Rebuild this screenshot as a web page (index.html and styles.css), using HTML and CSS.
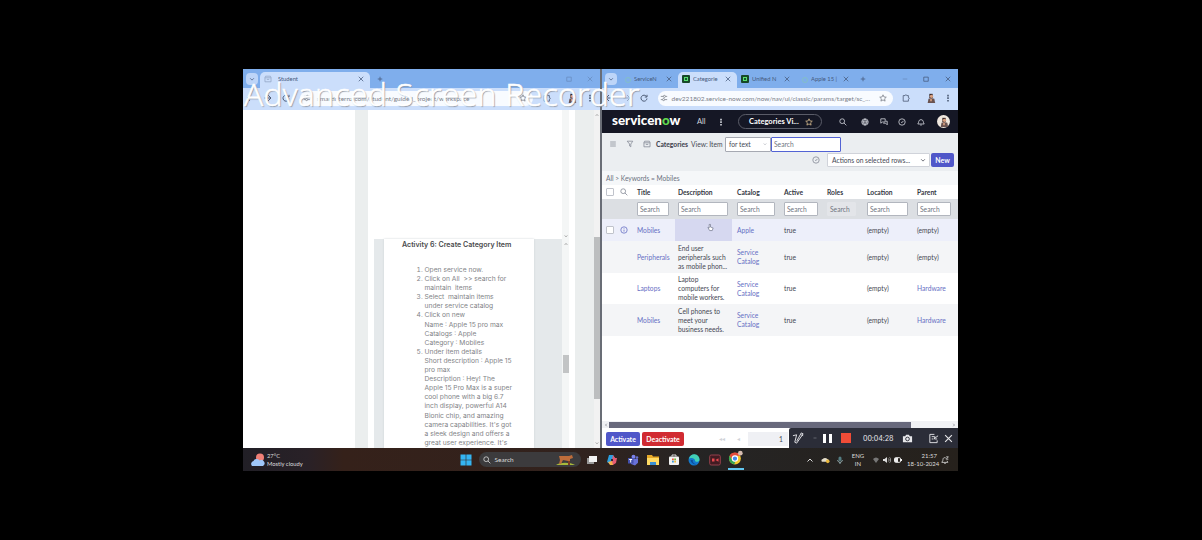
FILE: index.html
```
<!DOCTYPE html>
<html lang="en">
<head>
<meta charset="utf-8">
<title>Desktop</title>
<link rel="stylesheet" href="styles.css">
</head>
<body>
<svg class="defs" width="0" height="0">
  <symbol id="x" viewBox="0 0 8 8"><path d="M1 1l6 6M7 1L1 7"/></symbol>
  <symbol id="plus" viewBox="0 0 8 8"><path d="M4 1v6M1 4h6"/></symbol>
  <symbol id="chev" viewBox="0 0 8 8"><path d="M1.500 3L4 5.500 6.500 3"/></symbol>
  <symbol id="up" viewBox="0 0 8 8"><path d="M1.500 5.500L4 3l2.500 2.500"/></symbol>
  <symbol id="sq" viewBox="0 0 8 8"><path d="M1 1.500h6v5.500H1z"/></symbol>
  <symbol id="min" viewBox="0 0 8 8"><path d="M1 4h6"/></symbol>
  <symbol id="back" viewBox="0 0 8 8"><path d="M7.500 4H1M4 1L1 4l3 3"/></symbol>
  <symbol id="reload" viewBox="0 0 8 8"><path d="M6.500 2.500A3 3 0 1 0 7 4.500M7 .8v2.200H4.800"/></symbol>
  <symbol id="star" viewBox="0 0 10 10"><path d="M5 1l1.200 2.700 2.900.3L7 6l.6 2.900L5 7.400 2.400 8.900 3 6 .9 4l2.900-.3z"/></symbol>
  <symbol id="mag" viewBox="0 0 10 10"><path d="M7 4A3 3 0 1 1 1 4a3 3 0 0 1 6 0zM6.200 6.200L9.200 9.200"/></symbol>
  <symbol id="globe" viewBox="0 0 10 10"><path d="M9 5A4 4 0 1 1 1 5a4 4 0 0 1 8 0zM1 4h8M1 6.300h8M5 1c-2.300 2-2.300 6 0 8M5 1c2.300 2 2.300 6 0 8"/></symbol>
  <symbol id="chat" viewBox="0 0 10 10"><path d="M1 1h5.500v4H3L1 6.500zM4 6.500h3l2 2V4H7.500"/></symbol>
  <symbol id="clock" viewBox="0 0 10 10"><path d="M9 5A4 4 0 1 1 1 5a4 4 0 0 1 8 0zM5 5.500l2-2M4 5.500h1.500"/></symbol>
  <symbol id="bell" viewBox="0 0 10 10"><path d="M1 7.500C2.500 6 1.500 2 5 2s2.500 4 4 5.500zM4 8.800h2"/></symbol>
  <symbol id="tune" viewBox="0 0 10 10"><path d="M1 3h3M7 3h2M1 7h2M6 7h3"/><circle cx="5.500" cy="3" r="1.300"/><circle cx="4.500" cy="7" r="1.300"/></symbol>
  <symbol id="ext" viewBox="0 0 10 10"><path d="M1.500 2h2.300c0-1.400 2.200-1.400 2.200 0H8v2.400c1.400 0 1.400 2.200 0 2.200V9H1.500z"/></symbol>
  <symbol id="dots" viewBox="0 0 10 10"><path class="solid" d="M4 1h2v2H4zM4 4.200h2v2H4zM4 7.400h2v2H4z"/></symbol>
  <symbol id="menu" viewBox="0 0 10 10"><path d="M1.500 2.500h7M1.500 5h7M1.500 7.500h7"/></symbol>
  <symbol id="funnel" viewBox="0 0 10 10"><path d="M1.500 1.500h7L6 5v3.500L4.500 7.500V5z"/></symbol>
  <symbol id="inbox" viewBox="0 0 10 10"><path d="M2 1.500h6l.8 1.500v5.500H1.200V3zM1.200 3.500h7.600M3.500 5.500h3"/></symbol>
  <symbol id="info" viewBox="0 0 10 10"><path d="M9 5A4 4 0 1 1 1 5a4 4 0 0 1 8 0zM5 4.500v2.500M5 2.700v.8"/></symbol>
  <symbol id="person" viewBox="0 0 12 12"><path class="hair" d="M4 1h4v5H4z"/><circle class="skin" cx="6.500" cy="4" r="2"/><path class="shirt" d="M2 12l1-5 3-1 4 1 1 5z"/><path class="skin" d="M5 7h2v3H5z"/></symbol>
</svg>

<main class="screen">
  <div class="windows">
    <section class="win left">
      <div class="tabs">
        <span class="drop"><svg class="i s6"><use href="#chev"/></svg></span>
        <span class="tab on"><svg class="i s8 fade"><use href="#inbox"/></svg><b class="label">Student</b><svg class="i s6"><use href="#x"/></svg></span>
        <svg class="i s6"><use href="#plus"/></svg>
        <svg class="i s6 push fade"><use href="#sq"/></svg><svg class="i s6 last fade"><use href="#x"/></svg>
      </div>
      <div class="bar">
        <svg class="i s8"><use href="#back"/></svg>
        <svg class="i s8 flip"><use href="#back"/></svg>
        <svg class="i s8"><use href="#reload"/></svg>
        <span class="url"><svg class="i s8"><use href="#tune"/></svg><span>smartinternz.com/student/guided_project/workspace</span><svg class="i s8 end"><use href="#star"/></svg></span>
        <svg class="i s8"><use href="#ext"/></svg>
        <svg class="s10"><use href="#person"/></svg>
        <svg class="i s8"><use href="#dots"/></svg>
      </div>
      <div class="page">
        <div class="side"></div>
        <div class="content">
          <div class="upper"><span class="pane"></span><span class="track"><svg class="i s4 bottom"><use href="#chev"/></svg></span></div>
          <div class="lower">
            <article class="doc">
              <h1>Activity 6: Create Category Item</h1>
              <ol>
                <li>Open service now.</li>
                <li>Click on All &nbsp;&gt;&gt; search for<br>maintain &nbsp;items</li>
                <li>Select &nbsp;maintain items<br>under service catalog</li>
                <li>Click on new<br>Name : Apple 15 pro max<br>Catalogs : Apple<br>Category : Mobiles</li>
                <li>Under item details<br>Short description : Apple 15<br>pro max<br>Description : Hey! The<br>Apple 15 Pro Max is a super<br>cool phone with a big 6.7<br>inch display, powerful A14<br>Bionic chip, and amazing<br>camera capabilities. It's got<br>a sleek design and offers a<br>great user experience. It's</li>
              </ol>
            </article>
            <span class="track"><svg class="i s4"><use href="#up"/></svg><span class="thumb"></span></span>
          </div>
        </div>
        <div class="gutter"></div>
        <div class="scroll"><svg class="i s4"><use href="#up"/></svg><span class="thumb"></span><svg class="i s4 down"><use href="#chev"/></svg></div>
      </div>
    </section>

    <section class="win right">
      <div class="tabs">
        <span class="drop"><svg class="i s6"><use href="#chev"/></svg></span>
        <span class="tab"><i class="fav pale"></i><b class="label">ServiceN</b><svg class="i s6"><use href="#x"/></svg></span>
        <span class="tab on"><i class="fav"></i><b class="label">Categorie</b><svg class="i s6"><use href="#x"/></svg></span>
        <span class="tab"><i class="fav"></i><b class="label">Unified N</b><svg class="i s6"><use href="#x"/></svg></span>
        <span class="tab"><i class="fav pale"></i><b class="label">Apple 15 |</b><svg class="i s6"><use href="#x"/></svg></span>
        <svg class="i s6 add"><use href="#plus"/></svg>
        <svg class="i s6 push fade"><use href="#min"/></svg><svg class="i s6 mid"><use href="#sq"/></svg><svg class="i s6 last"><use href="#x"/></svg>
      </div>
      <div class="bar">
        <svg class="i s8"><use href="#back"/></svg>
        <svg class="i s8 flip fade"><use href="#back"/></svg>
        <svg class="i s8"><use href="#reload"/></svg>
        <span class="url"><svg class="i s8"><use href="#tune"/></svg><span>dev221802.service-now.com/now/nav/ui/classic/params/target/sc_...</span><svg class="i s8 end"><use href="#star"/></svg></span>
        <svg class="i s8"><use href="#ext"/></svg>
        <svg class="s10"><use href="#person"/></svg>
        <svg class="i s8"><use href="#dots"/></svg>
      </div>
      <nav class="nav">
        <b class="logo">servicen<em>o</em>w</b><span class="all">All</span><svg class="i s8"><use href="#dots"/></svg>
        <span class="pill"><b>Categories Vi...</b><svg class="i s8"><use href="#star"/></svg></span>
        <svg class="i s8"><use href="#mag"/></svg><svg class="i s8"><use href="#globe"/></svg><svg class="i s8"><use href="#chat"/></svg><svg class="i s8"><use href="#clock"/></svg><svg class="i s8"><use href="#bell"/></svg>
        <span class="avatar"><svg class="s10"><use href="#person"/></svg></span>
      </nav>
      <header class="head">
        <div class="line1">
          <svg class="i s8"><use href="#menu"/></svg><svg class="i s8"><use href="#funnel"/></svg><svg class="i s8"><use href="#inbox"/></svg>
          <b class="t1">Categories</b><span class="t2">View: Item</span>
          <span class="select">for text<svg class="i s4"><use href="#chev"/></svg></span><span class="field focus">Search</span>
        </div>
        <div class="line2">
          <svg class="i s8"><use href="#clock"/></svg>
          <span class="select">Actions on selected rows...<svg class="i s6"><use href="#chev"/></svg></span><b class="btn">New</b>
        </div>
      </header>
      <div class="crumb">All &gt; Keywords = Mobiles</div>
      <div class="table">
        <div class="row th"><span><i class="check"></i></span><span><svg class="i s8"><use href="#mag"/></svg></span><b>Title</b><b>Description</b><b>Catalog</b><b>Active</b><b>Roles</b><b>Location</b><b>Parent</b></div>
        <div class="row find"><span></span><span></span><span class="field">Search</span><span class="field">Search</span><span class="field">Search</span><span class="field">Search</span><span class="field off">Search</span><span class="field">Search</span><span class="field">Search</span></div>
        <div class="row sel"><span><i class="check"></i></span><span><svg class="i s8 blue"><use href="#info"/></svg></span><a>Mobiles</a><span class="hot"><svg class="hand" viewBox="0 0 8 9"><path d="M2.500 1v4L1 4.500l2 3.500h3l1-3-3-1V1z"/></svg></span><a>Apple</a><span>true</span><span></span><span>(empty)</span><span>(empty)</span></div>
        <div class="row tall alt"><span></span><span></span><a>Peripherals</a><span>End user<br>peripherals such<br>as mobile phon...</span><a>Service<br>Catalog</a><span>true</span><span></span><span>(empty)</span><span>(empty)</span></div>
        <div class="row tall"><span></span><span></span><a>Laptops</a><span>Laptop<br>computers for<br>mobile workers.</span><a>Service<br>Catalog</a><span>true</span><span></span><span>(empty)</span><a>Hardware</a></div>
        <div class="row tall alt"><span></span><span></span><a>Mobiles</a><span>Cell phones to<br>meet your<br>business needs.</span><a>Service<br>Catalog</a><span>true</span><span></span><span>(empty)</span><a>Hardware</a></div>
      </div>
      <div class="hscroll"><svg class="i s4 lt"><use href="#up"/></svg><span class="hthumb"></span><svg class="i s4 rt"><use href="#up"/></svg></div>
      <footer class="foot"><b class="btn">Activate</b><b class="btn red">Deactivate</b><span class="pg">◂◂</span><span class="pg">◂</span><span class="num">1</span></footer>
    </section>
  </div>

  <footer class="taskbar">
    <svg class="weather" viewBox="0 0 14 14"><circle cx="9" cy="4.500" r="4" fill="#f08077"/><path d="M1 13a3 3 0 0 1 1.500-5 3.500 3.500 0 0 1 6-.5A3 3 0 0 1 12 13z" fill="#9fc7fa"/></svg>
    <div class="wtext">27°C<br>Mostly cloudy</div>
    <svg class="app" viewBox="0 0 12 12"><path d="M.5.5h5.200v5.200H.5zM6.300.5h5.200v5.200H6.300zM.5 6.300h5.200v5.200H.5zM6.300 6.300h5.200v5.200H6.300z" fill="#35b5f2"/></svg>
    <div class="tsearch"><svg class="i s8"><use href="#mag"/></svg>Search<svg class="deer" viewBox="0 0 20 12"><path d="M0 11c4-3 14-3 19 0z" fill="#a8b93b"/><path d="M3 2h10l3-1 1 3-3 1v5h-2V7L7 6l-2 4H3l1-4z" fill="#bd6d3b"/><path d="M12 7h2v4h-2z" fill="#7a3c21"/></svg></div>
    <svg class="app" viewBox="0 0 12 12"><path d="M1 4h7v6H1z" fill="#999"/><path d="M3 2h8v6H3z" fill="#f2f2f2"/></svg>
    <svg class="app" viewBox="0 0 12 12"><path d="M3 1h4l2 3-3 2-2 4-3-2z" fill="#2a9fe0"/><path d="M7 1l2 3h2l-1 5-3 2H4l2-5z" fill="#e45b73"/><path d="M4 11L2 8l4-1 1 4z" fill="#f2b04e"/><path d="M5 5h2v2H5z" fill="#322c36"/></svg>
    <svg class="app" viewBox="0 0 12 12"><circle cx="6.500" cy="2.700" r="2" fill="#7b83eb"/><circle cx="10" cy="3.500" r="1.300" fill="#6670cf"/><path d="M3 4.800h8v4L8 11.500 4 10z" fill="#6871d8"/><path d="M1 4h5.500v5.500H1z" fill="#4350ad"/><path d="M2.200 5.500h3M3.700 5.500v3" stroke="#fff"/></svg>
    <svg class="app" viewBox="0 0 12 12"><path d="M0 1h5l1 1.500h6V11H0z" fill="#e7a928"/><path d="M0 4h12v7H0z" fill="#ffdb65"/><path d="M3 8h6v3H3z" fill="#398fd2"/></svg>
    <svg class="app" viewBox="0 0 12 12"><rect x="1" y="2.500" width="10" height="8.500" rx="1" fill="#f2f2f2"/><path d="M4 2.500V1h4v1.500" fill="none" stroke="#ddd"/><path d="M4 4.500h1.800v1.800H4z" fill="#e7573b"/><path d="M6.200 4.500H8v1.800H6.200z" fill="#78b83b"/><path d="M4 6.700h1.800v1.800H4z" fill="#3b9cde"/><path d="M6.200 6.700H8v1.800H6.200z" fill="#efb73c"/></svg>
    <svg class="app" viewBox="0 0 12 12"><circle cx="6" cy="6" r="5.500" fill="#1379ce"/><path d="M1 5a5.200 5.200 0 0 1 10.500 1c0 2-4 2.500-4.500.8C7.500 4 2.500 3 1 5z" fill="#42d1b7"/><path d="M5 6c-1 2 1 5 4.500 4A5 5 0 0 1 2.500 6z" fill="#0c4e9d"/></svg>
    <svg class="app" viewBox="0 0 12 12"><rect x=".7" y="1" width="10.600" height="10" rx="1.500" fill="#421b22" stroke="#96404c"/><path d="M3 4.500h2.500v3H3zM6.500 6l3-1.700v3.400z" fill="#e5484e"/></svg>
    <span class="chrome"><svg viewBox="0 0 14 14"><circle cx="6.500" cy="7.500" r="5.500" fill="#f4c72e"/><path d="M1.500 5a5.500 5.500 0 0 1 10 0H6.500L4.500 9z" fill="#e44b3c"/><path d="M1.500 5l3.300 5 2 .5-1 2.500A5.500 5.500 0 0 1 1.500 5z" fill="#36a853"/><circle cx="6.500" cy="7.500" r="2.500" fill="#4389ed" stroke="#fff"/><circle cx="11.500" cy="2.500" r="2.200" fill="#d7bdb1"/></svg></span>
    <svg class="i s8 tray"><use href="#up"/></svg>
    <svg class="cloud" viewBox="0 0 10 8"><path d="M1 6a2 2 0 0 1 1-3 3 3 0 0 1 5 0 2 2 0 0 1 1 3z" fill="#e3dcc8"/><circle cx="7.500" cy="5.500" r="2" fill="#e9b83e"/></svg>
    <svg class="mic" viewBox="0 0 6 8"><rect x="1.500" y=".5" width="3" height="4.500" rx="1.500" fill="#547d82"/><path d="M.7 4c0 3 4.600 3 4.600 0M3 6v2" fill="none" stroke="#a9c8cc" stroke-width=".8"/></svg>
    <div class="lang">ENG<br>IN</div>
    <div class="status"><svg viewBox="0 0 8 8"><path d="M1 3c2-2 4-2 6 0L4 7z" fill="#777"/></svg><svg viewBox="0 0 8 8"><path d="M0 3h1.500L4 1v6L1.500 5H0z" fill="#ddd"/><path d="M5.300 2.500c1 1 1 2 0 3M6.600 1.300c1.500 1.800 1.500 3.600 0 5.400" fill="none" stroke="#bbb" stroke-width=".8"/></svg><svg viewBox="0 0 8 8"><rect x=".5" y="1.700" width="6" height="4.600" rx="1" fill="none" stroke="#eee"/><path d="M1 2h3v4H1zM7 3h1v2H7z" fill="#eee"/></svg></div>
    <div class="time">21:57<br>18-10-2024</div>
    <svg class="i bellz" viewBox="0 0 10 10"><path d="M6 2.500C2.500 1 2.500 4 2.300 5.500L1 8h7.500L7.500 6M4 9.200h2M6.500 1h2.700L6.500 4h2.700"/></svg>
  </footer>

  <div class="recorder">
    <svg class="i pen" viewBox="0 0 14 14"><path d="M1 4l4-1-2 8 2 1 7-10-2-1-5 9M10 3l2 1"/></svg><svg class="i s4 dotc"><use href="#min"/></svg>
    <i class="pause"></i><i class="stop"></i><span>00:04:28</span>
    <svg class="cam" viewBox="0 0 12 12"><path d="M1 3.500h2.500L4.500 2h3l1 1.500H11V10H1z" fill="#e7e7ea"/><circle cx="6" cy="6.500" r="2" fill="#e7e7ea" stroke="#2b2d38"/></svg>
    <svg class="i cam" viewBox="0 0 12 12"><path d="M7 1.500H2v9h8V8M4 4h3M4 6.500h2M7 6l4-3M7.500 3.500L7 6.500h3"/></svg>
    <svg class="i rx"><use href="#x"/></svg>
  </div>
  <div class="watermark">Advanced Screen Recorder</div>
</main>
</body>
</html>
```
FILE: styles.css
```
* { box-sizing: border-box; }
body { margin: 0; width: 1202px; height: 540px; overflow: hidden; background: #000; padding: 69px 0 0 243px; font-family: Lato, "Liberation Sans", sans-serif; font-size: 6.7px; color: #464854; }
.defs { display: block; height: 0; position: absolute; }
svg { display: block; flex: none; }
.screen { position: relative; width: 715px; height: 402px; background: #232323; white-space: nowrap; }
.windows { display: grid; grid-template-columns: 357px 356px; gap: 2px; height: 379px; background: #696d76; }
.win { display: flex; flex-direction: column; background: #fff; overflow: hidden; }

/* icons */
.i { fill: none; stroke: currentColor; stroke-width: 1; }
.solid { fill: currentColor; stroke: none; }
.s4 { width: 4px; height: 4px; }
.s6 { width: 6px; height: 6px; }
.s8 { width: 8px; height: 8px; }
.s10 { width: 10px; height: 10px; }
.fade { opacity: .4; }
.flip { transform: scaleX(-1); }
.hair { fill: #3a2927; }
.skin { fill: #d9a080; }
.shirt { fill: #6a5350; }

/* browser chrome */
.tabs { display: flex; align-items: center; height: 19px; background: #7faeec; color: #45597c; padding-left: 3px; flex: none; }
.drop { display: grid; place-items: center; width: 12px; height: 12px; border-radius: 4px; background: #bdd5f8; margin-right: 2px; }
.tab { display: flex; align-items: center; width: 59px; height: 16px; padding: 0 6px 3px 4px; margin-top: 3px; }
.tab.on { background: #cbdefb; border-radius: 5px 5px 0 0; }
.label { font-weight: 400; font-size: 5.8px; line-height: 8px; flex: 1; margin-left: 3px; overflow: hidden; }
.left .tab { width: 110px; margin-right: 7px; }
.left .label { margin-left: 6px; }
.tabs .add { margin-left: 5px; }
.tabs .push { margin-left: auto; margin-right: 15px; }
.tabs .mid { margin-right: 16px; }
.tabs .last { margin-right: 7px; }
.fav { width: 8px; height: 8px; background: #17552f; border: 2px solid #174828; box-shadow: inset 0 0 0 1px #58e06f; border-radius: 1px; }
.fav.pale { background: none; border-color: transparent; box-shadow: none; }
.fav.pale::before { content: ""; display: block; width: 4px; height: 4px; border: 1px solid #83bfc7; border-radius: 50%; }
.bar { display: flex; align-items: center; height: 22px; background: #cbdefb; color: #4c5b75; gap: 10px; padding: 0 6px 2px 3px; flex: none; }
.right .bar { gap: 9.500px; }
.url { flex: 1; display: flex; align-items: center; gap: 4px; height: 15px; border-radius: 8px; background: #f8fbff; padding: 0 6px 0 2px; font-size: 6.5px; color: #7b8089; min-width: 0; }
.left .url { padding-left: 3px; gap: 6px; }
.end { margin-left: auto; }
.bar > .s10 { margin: 0 -1px 0 6px; }

/* document window */
.page { flex: 1; display: grid; grid-template-columns: 112px 207px 32px 6px; min-height: 0; }
.side { background: #fff; }
.content { display: flex; flex-direction: column; min-height: 0; border-left: 13px solid #ebeeee; }
.upper { height: 129px; display: flex; justify-content: space-between; }
.track { width: 7px; background: #f4f6f6; display: flex; flex-direction: column; align-items: center; color: #444; padding-top: 3px; margin-right: -7px; }
.bottom { margin: auto 0 1px; }
.lower { flex: 1; display: flex; min-height: 0; margin-left: 6px; background: #e5e9eb; padding-left: 10px; justify-content: space-between; }
.content .thumb { width: 6px; height: 18px; background: #c2c4c5; margin-top: 109px; }
.gutter { background: linear-gradient(90deg, transparent 7px, #fff 7px 13px, #ebeeee 13px); }
.scroll { background: #f2f2f2; display: flex; flex-direction: column; align-items: center; color: #555; padding: 3px 0; }
.scroll .thumb { width: 6px; height: 162px; background: #bcbebf; margin-top: 120px; }
.scroll .down { margin-top: auto; }
.doc { width: 150px; background: #fff; padding-left: 18px; font-family: Inter, sans-serif; overflow: hidden; box-shadow: 0 0 2px #ccd3d7; }
.doc h1 { font-size: 7.050px; line-height: 10px; margin: 1px 0 16px; font-weight: 600; color: #4a4b4d; }
.doc ol { margin: 0; padding-left: 22.500px; font-size: 6.700px; line-height: 9.100px; color: #828487; }

/* list window */
.nav { display: grid; grid-template-columns: 85px 27px 13px 105px 21px 24px 13px 24px 14px 30px; align-items: center; height: 23px; background: #151725; color: #d3d5dd; font-size: 7.5px; flex: none; }
.nav > .s8 { justify-self: center; }
.logo { font-size: 13.400px; padding-left: 10px; color: #fff; line-height: 20px; font-weight: 900; height: 23px; }
.logo em { font-style: normal; color: #62d84e; }
.all { padding-left: 10px; }
.pill { display: flex; align-items: center; gap: 6px; width: 84px; height: 15px; margin-left: 11px; padding-left: 10px; border: 1px solid #5a5c68; border-radius: 8px; font-size: 7.500px; color: #fff; }
.pill svg { color: #d8bd8f; }
.avatar { display: grid; place-items: center; width: 13px; height: 13px; border-radius: 50%; background: #f0e8df; justify-self: end; margin-right: 8px; }
.head { height: 38px; background: #ebeef1; flex: none; }
.line1 { display: flex; align-items: center; height: 20px; padding: 2px 0 0 7px; gap: 9px; }
.line1 svg, .th svg { color: #858a97; }
.line1 .t1 { margin-left: -4px; }
.t1 { font-size: 6.700px; width: 32px; font-weight: 900; }
.t2 { width: 32px; margin-left: -6px; font-size: 6.700px; }
.line1 .select { width: 46px; margin-left: -7px; height: 15px; }
.line1 .focus { margin-left: -9px; width: 70px; height: 15px; border: 1px solid #5363d4; }
.select { display: flex; align-items: center; justify-content: space-between; background: #fff; border: 1px solid #a6a9b2; padding: 0 3px; border-radius: 1px; }
.line2 { display: flex; align-items: center; justify-content: flex-end; height: 14px; padding-right: 4px; }
.line2 > svg { color: #858a97; margin-right: 7px; }
.line2 .select { width: 103px; height: 14px; border-color: #d0d3da; padding-left: 4px; font-size: 6.700px; }
.btn { display: grid; place-items: center; height: 14px; width: 23px; background: #5057c9; color: #fff; border-radius: 2px; font-size: 6.900px; margin-left: 1px; }
.crumb { height: 14px; line-height: 14px; background: #f5f7f9; padding-left: 4px; color: #6b7280; font-size: 6.600px; flex: none; }
.table { flex: 1; }
.row { display: grid; grid-template-columns: 16px 19px 41px 59px 47px 43px 40px 50px 41px; height: 14px; align-items: center; line-height: 9px; }
.row > span:first-child { justify-self: center; }
.row > span:nth-child(2) { padding-left: 2px; }
.th b { color: #343743; }
.check { display: block; width: 8px; height: 8px; background: #fff; border: 1px solid #c0c3cb; border-radius: 1px; }
.field { display: flex; align-items: center; height: 14px; background: #fff; border: 1px solid #b2b6be; border-radius: 1px; padding-left: 2px; color: #70747f; font-size: 6.700px; }
.find { height: 20px; background: #dcdfe3; }
.find .field { margin: 0 9px 0 0; }
.find .off { background: #e3e5e9; border-color: #e3e5e9; margin-right: 11px; }
.find .field:last-child { margin-right: 7px; }
.sel { height: 22px; background: #edeffa; }
.row > .hot { align-self: stretch; background: #d6d8f0; margin: 0 5px 0 -3px; padding: 4px 0 0 32px; }
.hand { width: 7px; height: 9px; fill: #fff; stroke: #70758b; stroke-width: .8; }
.row a, .blue { color: #6770c4; }
.tall { height: 31.600px; padding-top: 1px; }
.alt { background: #f4f5f7; }
.hscroll { display: flex; align-items: center; height: 7px; background: #f0f1f4; flex: none; padding: 0 2px; }
.hthumb { width: 302px; height: 6px; background: #68697c; margin: 0 auto 0 1px; }
.lt { transform: rotate(-90deg); }
.rt { transform: rotate(90deg); }
.foot { display: flex; align-items: center; height: 20px; padding: 1px 0 0 3px; flex: none; }
.foot .btn { width: 34px; height: 14px; }
.foot .red { width: 42px; background: #d12b32; margin-left: 2px; }
.pg { margin-left: 35px; color: #d0d3d8; font-size: 6px; }
.pg + .pg { margin-left: 12px; }
.num { width: 40px; height: 14px; margin-left: 8px; background: #eff0f4; text-align: right; padding-right: 5px; line-height: 14px; }

/* overlays */
.recorder { position: absolute; left: 546px; top: 359px; width: 169px; height: 20px; background: #2b2d38; color: #e7e7ea; display: flex; align-items: center; padding-left: 3px; font: 7.200px Inter, sans-serif; border-radius: 2px 0 0 0; }
.pen { width: 13px; height: 13px; }
.dotc { margin-left: 8px; opacity: .6; }
.pause { width: 9px; height: 9px; border: solid #fff; border-width: 0 3px; margin-left: 6px; }
.stop { width: 10px; height: 10px; background: #f04c37; margin: 0 12px 0 9px; }
.recorder span { width: 39px; letter-spacing: -.1px; }
.cam { width: 11px; height: 11px; }
.cam + .cam { margin-left: 15px; }
.rx { width: 9px; height: 9px; margin-left: 5px; }
.watermark { position: absolute; left: 1px; top: 5px; font: 300 32px/40px "Open Sans", "Noto Sans", sans-serif; color: #fff; letter-spacing: .3px; -webkit-text-stroke: .6px #fff; text-shadow: 1px 1px 1px #8c96a5; }

/* taskbar */
.taskbar { display: flex; align-items: center; height: 23px; background: linear-gradient(90deg, #211f26, #292127 9%, #35211a 14%, #32221d 45%, #252424 65%, #26211c); color: #dcdcdc; font-size: 6px; line-height: 7.500px; padding-left: 8px; }
.weather { width: 14px; height: 14px; }
.wtext { width: 193px; margin-left: 2px; font-size: 5.800px; }
.app { width: 12px; height: 12px; margin-right: 8.500px; }
.tsearch { display: flex; align-items: center; gap: 4px; width: 102px; height: 15px; margin: 0 5px 0 -2px; padding: 0 5px 0 4px; border-radius: 8px; background: #3c3b3d; font-size: 6.500px; }
.deer { width: 20px; height: 12px; margin-left: auto; }
.chrome { width: 16px; height: 20px; border-bottom: 2px solid #62c7f0; margin-left: -1px; }
.chrome svg { width: 15px; height: 16px; }
.tray { margin-left: auto; }
.cloud { width: 9px; height: 8px; margin-left: 7px; }
.mic { width: 6px; height: 8px; margin-left: 7px; }
.lang { width: 14px; margin-left: 8px; text-align: center; }
.status { display: flex; gap: 3px; margin-left: 7px; }
.status svg { width: 8px; height: 8px; }
.time { width: 30px; text-align: right; margin-left: 5px; }
.bellz { width: 8px; height: 8px; margin: 0 9px 0 4px; }
```
